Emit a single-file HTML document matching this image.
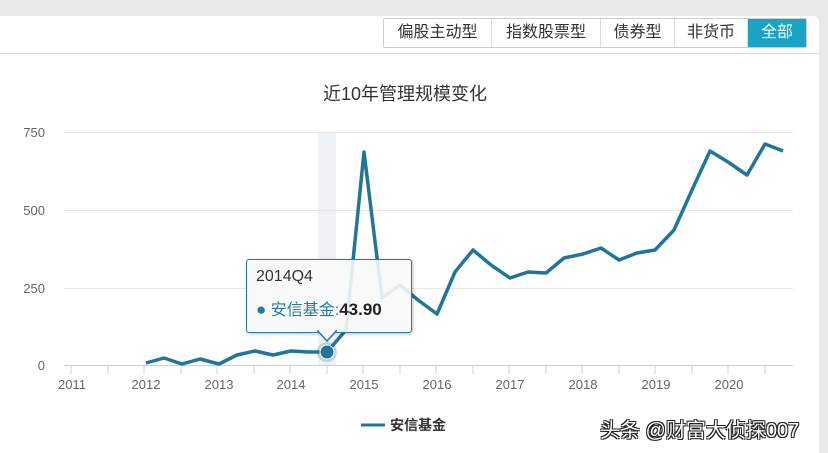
<!DOCTYPE html>
<html><head><meta charset="utf-8"><style>
body{margin:0;width:828px;height:453px;overflow:hidden;background:#e9e9e9;font-family:"Liberation Sans","Noto Sans CJK SC",sans-serif;position:relative}
.card{position:absolute;left:0;top:16px;width:819px;height:437px;background:#fff;border-top-right-radius:6px}
.hdr{position:absolute;left:0;top:53px;width:819px;height:1px;background:#d6d6d6}
.btns{position:absolute;left:383px;top:18px;height:28px;display:flex;border:1px solid #ccc;border-radius:2px;overflow:hidden}
.btns div{height:28px;line-height:28px;font-size:16px;color:#333;text-align:center;border-right:1px solid #ddd}
.btns div.on{background:#1aa3c3;color:#fff;border:none}
.title{position:absolute;left:0;width:810px;top:80px;text-align:center;font-size:18px;color:#333}
.tip{position:absolute;left:246px;top:259px;width:164px;height:72px;border:1.5px solid #2a7b9b;background:rgba(247,249,250,0.9);border-radius:3px;box-shadow:1px 1px 3px rgba(0,0,0,.25)}
.tip .a{position:absolute;left:9px;top:8px;font-size:16px;color:#333}
.tip .b{position:absolute;left:9px;top:36px;font-size:16px;color:#2a7b9b;white-space:nowrap}
.tip .b b{color:#222;font-size:17px}
.wm{position:absolute;left:600px;top:414px;font-size:20px;color:#fff;text-shadow:-1px -1px 0 #222,1px -1px 0 #222,-1px 1px 0 #222,1px 1px 0 #222;white-space:nowrap}
</style></head><body>
<div class="card"></div>
<div class="hdr"></div>
<div class="btns"><div style="width:107px">偏股主动型</div><div style="width:108px">指数股票型</div><div style="width:73px">债券型</div><div style="width:72px">非货币</div><div class="on" style="width:58px">全部</div></div>
<div class="title">近10年管理规模变化</div>
<svg width="828" height="453" style="position:absolute;left:0;top:0">
<rect x="318" y="131" width="18" height="234" fill="#eef2f7"/>
<g stroke="#e6e6e6" stroke-width="1">
<line x1="64" y1="132.5" x2="793" y2="132.5"/><line x1="64" y1="210.5" x2="793" y2="210.5"/><line x1="64" y1="288.5" x2="793" y2="288.5"/></g>
<line x1="64" y1="365.5" x2="793" y2="365.5" stroke="#c0d0e0"/>
<g stroke="#c0d0e0">
<line x1="71" y1="365" x2="71" y2="374"/><line x1="108" y1="365" x2="108" y2="374"/><line x1="144" y1="365" x2="144" y2="374"/><line x1="181" y1="365" x2="181" y2="374"/><line x1="217" y1="365" x2="217" y2="374"/><line x1="254" y1="365" x2="254" y2="374"/><line x1="290" y1="365" x2="290" y2="374"/><line x1="327" y1="365" x2="327" y2="374"/><line x1="363" y1="365" x2="363" y2="374"/><line x1="400" y1="365" x2="400" y2="374"/><line x1="436" y1="365" x2="436" y2="374"/><line x1="473" y1="365" x2="473" y2="374"/><line x1="509" y1="365" x2="509" y2="374"/><line x1="546" y1="365" x2="546" y2="374"/><line x1="582" y1="365" x2="582" y2="374"/><line x1="619" y1="365" x2="619" y2="374"/><line x1="655" y1="365" x2="655" y2="374"/><line x1="692" y1="365" x2="692" y2="374"/><line x1="728" y1="365" x2="728" y2="374"/><line x1="765" y1="365" x2="765" y2="374"/></g>
<g font-size="13" fill="#666" text-anchor="end"><text x="45" y="137">750</text><text x="45" y="215">500</text><text x="45" y="293">250</text><text x="45" y="370">0</text></g>
<g font-size="13" fill="#666" text-anchor="middle"><text x="72" y="389">2011</text><text x="146" y="389">2012</text><text x="219" y="389">2013</text><text x="291" y="389">2014</text><text x="364" y="389">2015</text><text x="437" y="389">2016</text><text x="510" y="389">2017</text><text x="583" y="389">2018</text><text x="656" y="389">2019</text><text x="729" y="389">2020</text></g>
<polyline fill="none" stroke="#21759b" stroke-width="3.5" stroke-linejoin="round" points="146,363 164,358 182,364 200,359 219,364 237,355 255,351 273,355 291,351 309,352 327,352 346,330 364,152 382,298 400,285 418,300 437,314 455,272 473,250 491,265 510,278 528,272 546,273 564,258 583,254 601,248 619,260 637,253 655,250 674,230 692,190 710,151 728,162 747,175 765,144 783,151"/>
<circle cx="327" cy="352" r="10" fill="#21759b" opacity="0.25"/>
<circle cx="327" cy="352" r="7" fill="#21759b" stroke="#fff" stroke-width="1"/>
<line x1="361" y1="425" x2="385" y2="425" stroke="#21759b" stroke-width="3"/>
<text x="390" y="430" font-size="14" font-weight="bold" fill="#333">安信基金</text>
<rect x="819" y="16" width="9" height="437" fill="#e9e9e9"/>
</svg>
<div class="tip"><div class="a">2014Q4</div><div class="b"><span style="font-size:17px">●</span> 安信基金:<b>43.90</b></div></div>
<svg width="20" height="12" style="position:absolute;left:317px;top:330px"><path d="M0,0 L10,11 L20,0" fill="#f7f9fa" stroke="#2a7b9b" stroke-width="1.5"/></svg>
<div class="wm">头条 @财富大侦探007</div>
</body></html>
